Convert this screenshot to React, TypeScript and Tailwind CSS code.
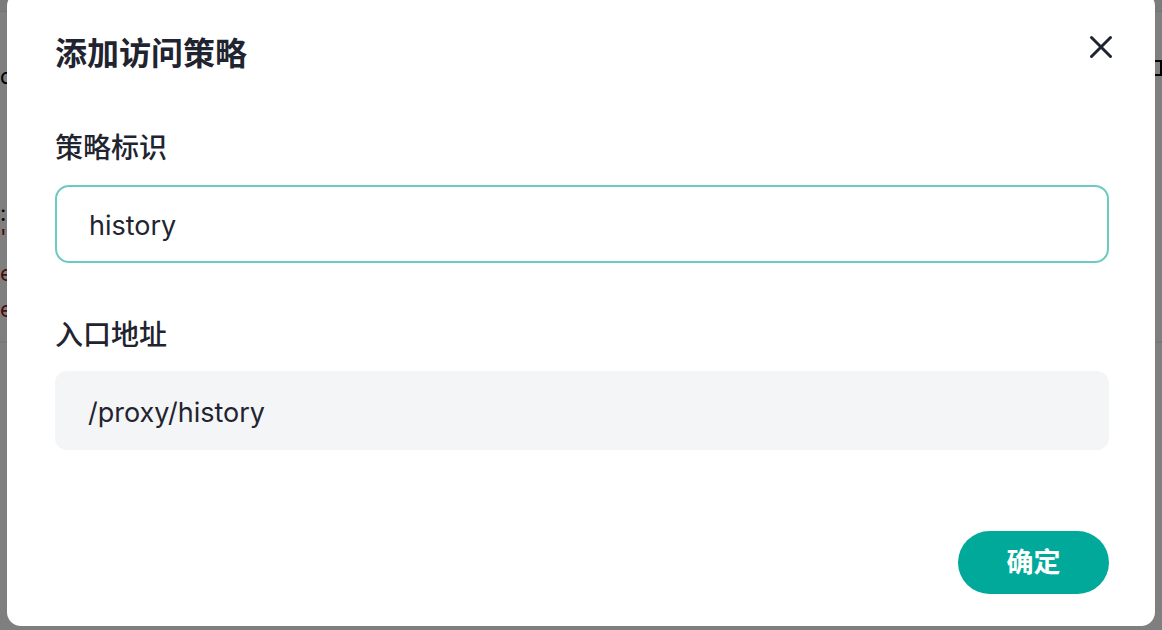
import { X } from "lucide-react";

const font = {
  fontFamily: '"Inter", "Noto Sans CJK SC", sans-serif',
};

function BackgroundPage() {
  return (
    <div className="h-[630px] w-full bg-white text-[22px] text-black">
      <div className="h-[12px] border-b border-[#e5e7eb] bg-[#f7f7f7]" />
      <div className="flex justify-between pt-[48px]">
        <span>d</span>
        <span className="h-[16px] w-[9px] self-start border-2 border-black" />
      </div>
      <div className="mt-[108px] leading-[24px]">
        <div>:</div>
        <div className="text-[#8b1a1a]">'</div>
        <div className="mt-[12px] text-[#8b1a1a]">e</div>
        <div className="mt-[12px] text-[#8b1a1a]">e</div>
      </div>
      <div className="mt-[20px] h-[2px] bg-[#f0f0f0]" />
    </div>
  );
}

export default function App() {
  return (
    <div className="relative h-[630px] w-[1162px] overflow-hidden" style={font}>
      <BackgroundPage />

      {/* backdrop */}
      <div className="absolute inset-0 bg-black/50">
        <div className="absolute left-[7px] top-[-8px] h-[634px] w-[1148px] rounded-[14px] bg-white pl-[48px] pr-[46px] pt-[41px] text-[#1f2430]">
          <h2 className="text-[32px] font-semibold leading-[42px]">添加访问策略</h2>

          <button className="absolute right-[35px] top-[36px] text-[#1f2430]">
            <X size={38} strokeWidth={1.9} />
          </button>

          <div className="mt-[55px] text-[28px] font-medium leading-[36px]">策略标识</div>
          <div className="mt-[19px] flex h-[78px] items-center rounded-[14px] border-2 border-[#6bcbc1] px-[32px] pt-[4px] text-[27px]">
            history
          </div>

          <div className="mt-[54px] text-[28px] font-medium leading-[36px]">入口地址</div>
          <div className="mt-[18px] flex h-[79px] items-center rounded-[12px] bg-[#f4f5f7] px-[33px] pt-[5px] text-[27px]">
            /proxy/history
          </div>

          <div className="mt-[81px] flex justify-end">
            <button className="flex h-[63px] w-[151px] items-center justify-center rounded-full bg-[#00a99a] pt-[2px] text-[27px] font-semibold text-white">
              确定
            </button>
          </div>
        </div>
      </div>
    </div>
  );
}
